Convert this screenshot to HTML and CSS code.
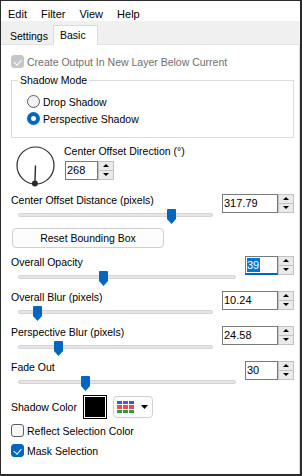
FILE: index.html
```html
<!DOCTYPE html>
<html lang="en">
<head>
    <meta charset="UTF-8">
    <meta name="viewport" content="width=device-width, initial-scale=1.0">
    <title>Shadow</title>
    <link rel="stylesheet" href="styles.css">
</head>
<body>
<div class="window">
    <div class="menubar">
        <span>Edit</span>
        <span>Filter</span>
        <span>View</span>
        <span>Help</span>
    </div>

    <div class="tabstrip">
        <div class="tab">Settings</div>
        <div class="tab active">Basic</div>
    </div>

    <div class="panel">
        <div class="check top disabled"><span class="box on"></span>Create Output In New Layer Below Current</div>

        <fieldset class="group">
            <legend>Shadow Mode</legend>
            <div class="radio"><span class="dot"></span>Drop Shadow</div>
            <div class="radio"><span class="dot on"></span>Perspective Shadow</div>
        </fieldset>

        <div class="dial-row">
            <svg class="dial" width="42" height="42" viewBox="0 0 42 42">
                <circle cx="20.5" cy="19.5" r="18.5" fill="none" stroke="#2b2b2b" stroke-width="1.2"/>
                <line x1="20.5" y1="19.5" x2="19.9" y2="37.5" stroke="#2b2b2b" stroke-width="1.4"/>
                <circle cx="19.9" cy="37.5" r="3" fill="#2b2b2b"/>
            </svg>
            <div class="dial-side">
                <div class="lbl">Center Offset Direction (°)</div>
                <div class="spin">
                    <div class="num narrow">268</div>
                    <div class="arrows"><span class="up"></span><span class="down"></span></div>
                </div>
            </div>
        </div>

        <div class="field">
            <div class="lbl">Center Offset Distance (pixels)</div>
            <div class="spin">
                <div class="num">317.79</div>
                <div class="arrows"><span class="up"></span><span class="down"></span></div>
            </div>
            <div class="slider">
                <div class="track"></div>
                <svg class="thumb" style="left:156px" width="9" height="15" viewBox="0 0 9 15"><path d="M0 1Q0 0 1 0H8Q9 0 9 1V10L4.5 15L0 10Z" fill="#0067c0"/></svg>
            </div>
        </div>

        <button class="btn">Reset Bounding Box</button>

        <div class="field first">
            <div class="lbl">Overall Opacity</div>
            <div class="spin">
                <div class="num narrow focus"><span class="sel">39</span></div>
                <div class="arrows"><span class="up"></span><span class="down"></span></div>
            </div>
            <div class="slider long">
                <div class="track"></div>
                <svg class="thumb" style="left:88px" width="9" height="15" viewBox="0 0 9 15"><path d="M0 1Q0 0 1 0H8Q9 0 9 1V10L4.5 15L0 10Z" fill="#0067c0"/></svg>
            </div>
        </div>

        <div class="field">
            <div class="lbl">Overall Blur (pixels)</div>
            <div class="spin">
                <div class="num">10.24</div>
                <div class="arrows"><span class="up"></span><span class="down"></span></div>
            </div>
            <div class="slider">
                <div class="track"></div>
                <svg class="thumb" style="left:22px" width="9" height="15" viewBox="0 0 9 15"><path d="M0 1Q0 0 1 0H8Q9 0 9 1V10L4.5 15L0 10Z" fill="#0067c0"/></svg>
            </div>
        </div>

        <div class="field">
            <div class="lbl">Perspective Blur (pixels)</div>
            <div class="spin">
                <div class="num">24.58</div>
                <div class="arrows"><span class="up"></span><span class="down"></span></div>
            </div>
            <div class="slider">
                <div class="track"></div>
                <svg class="thumb" style="left:43px" width="9" height="15" viewBox="0 0 9 15"><path d="M0 1Q0 0 1 0H8Q9 0 9 1V10L4.5 15L0 10Z" fill="#0067c0"/></svg>
            </div>
        </div>

        <div class="field">
            <div class="lbl">Fade Out</div>
            <div class="spin">
                <div class="num narrow">30</div>
                <div class="arrows"><span class="up"></span><span class="down"></span></div>
            </div>
            <div class="slider long">
                <div class="track"></div>
                <svg class="thumb" style="left:70px" width="9" height="15" viewBox="0 0 9 15"><path d="M0 1Q0 0 1 0H8Q9 0 9 1V10L4.5 15L0 10Z" fill="#0067c0"/></svg>
            </div>
        </div>

        <div class="color-row">
            <span>Shadow Color</span>
            <span class="swatch"></span>
            <span class="palette">
                <svg width="17" height="12" viewBox="0 0 17 12">
                    <rect x="0" y="0" width="5" height="3" fill="#3a55f0"/>
                    <rect x="6" y="0" width="5" height="3" fill="#6a4be0"/>
                    <rect x="12" y="0" width="5" height="3" fill="#3a55f0"/>
                    <rect x="0" y="4" width="5" height="4" fill="#f0484e"/>
                    <rect x="6" y="4" width="5" height="4" fill="#f0484e"/>
                    <rect x="12" y="4" width="5" height="4" fill="#f0484e"/>
                    <rect x="0" y="9" width="5" height="3" fill="#2e9b45"/>
                    <rect x="6" y="9" width="5" height="3" fill="#2e9b45"/>
                    <rect x="12" y="9" width="5" height="3" fill="#2e9b45"/>
                </svg>
                <svg class="caret" width="7" height="4" viewBox="0 0 7 4"><path d="M0 0H7L3.5 4Z" fill="#000"/></svg>
            </span>
        </div>

        <div class="check"><span class="box"></span>Reflect Selection Color</div>
        <div class="check"><span class="box on blue"></span>Mask Selection</div>
    </div>
</div>
</body>
</html>
```

FILE: styles.css
```css
body {
    margin: 0;
    font-family: "Liberation Sans", Arial, sans-serif;
    font-size: 10.5px;
    color: #000;
    background: #fff;
}

.window {
    width: 302px;
    height: 476px;
    box-sizing: border-box;
    border: 1px solid #2b2b2b;
    border-right-width: 2px;
    border-bottom-width: 2px;
    display: flex;
    flex-direction: column;
}

/* menu */
.menubar {
    height: 20px;
    box-sizing: border-box;
    padding-top: 6px;
    display: flex;
    font-size: 11px;
    line-height: 14px;
}

.menubar span {
    padding: 0 7px;
}

/* tabs */
.tabstrip {
    height: 24px;
    box-sizing: border-box;
    background: #f0f0f0;
    border-bottom: 1px solid #e3e3e3;
    display: flex;
    align-items: flex-end;
    padding-left: 2px;
}

.tab {
    height: 18px;
    box-sizing: border-box;
    padding: 3px 5px 0 7px;
    line-height: 15px;
}

.tab.active {
    height: 20px;
    margin-bottom: -1px;
    padding: 2px 11px 0 6px;
    background: #fff;
    border: 1px solid #dcdcdc;
    border-bottom: none;
}

/* panel */
.panel {
    flex: 1;
    border-right: 1px solid #dcdcdc;
    padding: 10px 5px 0 10px;
}

.check {
    display: flex;
    align-items: center;
    height: 17px;
}

.check.top {
    height: 13px;
}

.check.disabled {
    color: #6e6e6e;
}

.box {
    width: 13px;
    height: 13px;
    box-sizing: border-box;
    border: 1px solid #606060;
    border-radius: 3px;
    background: #f7f7f7;
    margin-right: 3px;
    position: relative;
}

.box.on {
    background: #c6c6c6;
    border-color: #c6c6c6;
}

.box.on.blue {
    background: #0067c0;
    border-color: #0067c0;
}

.box.on::after {
    content: "";
    position: absolute;
    left: 3px;
    top: 2px;
    width: 4px;
    height: 6px;
    border: solid #fff;
    border-width: 0 1.5px 1.5px 0;
    transform: rotate(40deg);
}

.check:not(.top) {
    margin-top: 3px;
}

.group {
    margin: 6px 0 0;
    padding: 6px 0 10px 6px;
    border: 1px solid #dcdcdc;
    min-width: 0;
}

.group legend {
    padding: 0 2px;
    line-height: 13px;
}

.radio {
    display: flex;
    align-items: center;
    height: 17px;
    padding-left: 9px;
}

.dot {
    width: 13px;
    height: 13px;
    box-sizing: border-box;
    border-radius: 50%;
    border: 1px solid #5c5c5c;
    background: #f3f3f3;
    margin-right: 3px;
}

.dot.on {
    border: 4px solid #0067c0;
    background: #fff;
}

/* direction dial */
.dial-row {
    display: flex;
    height: 47px;
    margin-top: 8px;
}

.dial {
    margin-left: 4px;
}

.dial-side {
    margin-left: 7px;
    margin-top: -1px;
}

.dial-side .lbl {
    line-height: 13px;
}

.dial-side .spin {
    margin: 3px 0 0 1px;
}

/* slider fields */
.field {
    display: grid;
    grid-template-columns: 1fr auto;
    grid-template-rows: 14px 21px;
}

.field.first {
    margin-top: 7px;
}

.field .lbl {
    line-height: 14px;
}

.field .spin {
    grid-column: 2;
    grid-row: 1 / 3;
    align-self: start;
    margin-top: 1px;
}

.spin {
    display: flex;
}

.num {
    width: 56px;
    height: 19px;
    box-sizing: border-box;
    border: 1px solid #7a7a7a;
    padding-left: 1px;
    font-size: 11px;
    line-height: 17px;
    background: #fff;
}

.num.narrow {
    width: 33px;
}

.num.focus {
    border-bottom: 2px solid #0067c0;
}

.sel {
    background: #0078d7;
    color: #fff;
    padding: 1px 1px 1px 0;
}

.arrows {
    width: 16px;
    height: 19px;
    display: grid;
    grid-template-rows: 1fr 1fr;
}

.arrows span {
    border: 1px solid #c2c2c2;
    background: #eaeaea;
    display: flex;
    align-items: center;
    justify-content: center;
}

.arrows span + span {
    border-top: none;
}

.arrows span::after {
    content: "";
    border-left: 3px solid transparent;
    border-right: 3px solid transparent;
}

.arrows .up::after {
    border-bottom: 3px solid #000;
}

.arrows .down::after {
    border-top: 3px solid #000;
}

.slider {
    position: relative;
}

.track {
    height: 4px;
    box-sizing: border-box;
    margin: 6px 9px 0 7px;
    background: #e6e6e6;
    border: 1px solid #d4d4d4;
    border-radius: 2px;
}

.thumb {
    position: absolute;
    top: 2px;
}

.btn {
    display: block;
    margin-left: 1px;
    width: 152px;
    height: 20px;
    font: inherit;
    color: #000;
    background: #fdfdfd;
    border: 1px solid #d0d0d0;
    border-radius: 4px;
    padding: 0;
}

/* colour picker */
.color-row {
    display: flex;
    align-items: center;
    height: 24px;
}

.swatch {
    width: 24px;
    height: 24px;
    box-sizing: border-box;
    margin-left: 6px;
    border: 1px solid #000;
    box-shadow: inset 0 0 0 1px #fff;
    background: #000;
}

.palette {
    width: 40px;
    height: 22px;
    box-sizing: border-box;
    margin-left: 6px;
    border: 1px solid #d0d0d0;
    border-radius: 4px;
    background: #fdfdfd;
    display: flex;
    align-items: center;
    padding-left: 3px;
}

.palette .caret {
    margin-left: 7px;
}
```
